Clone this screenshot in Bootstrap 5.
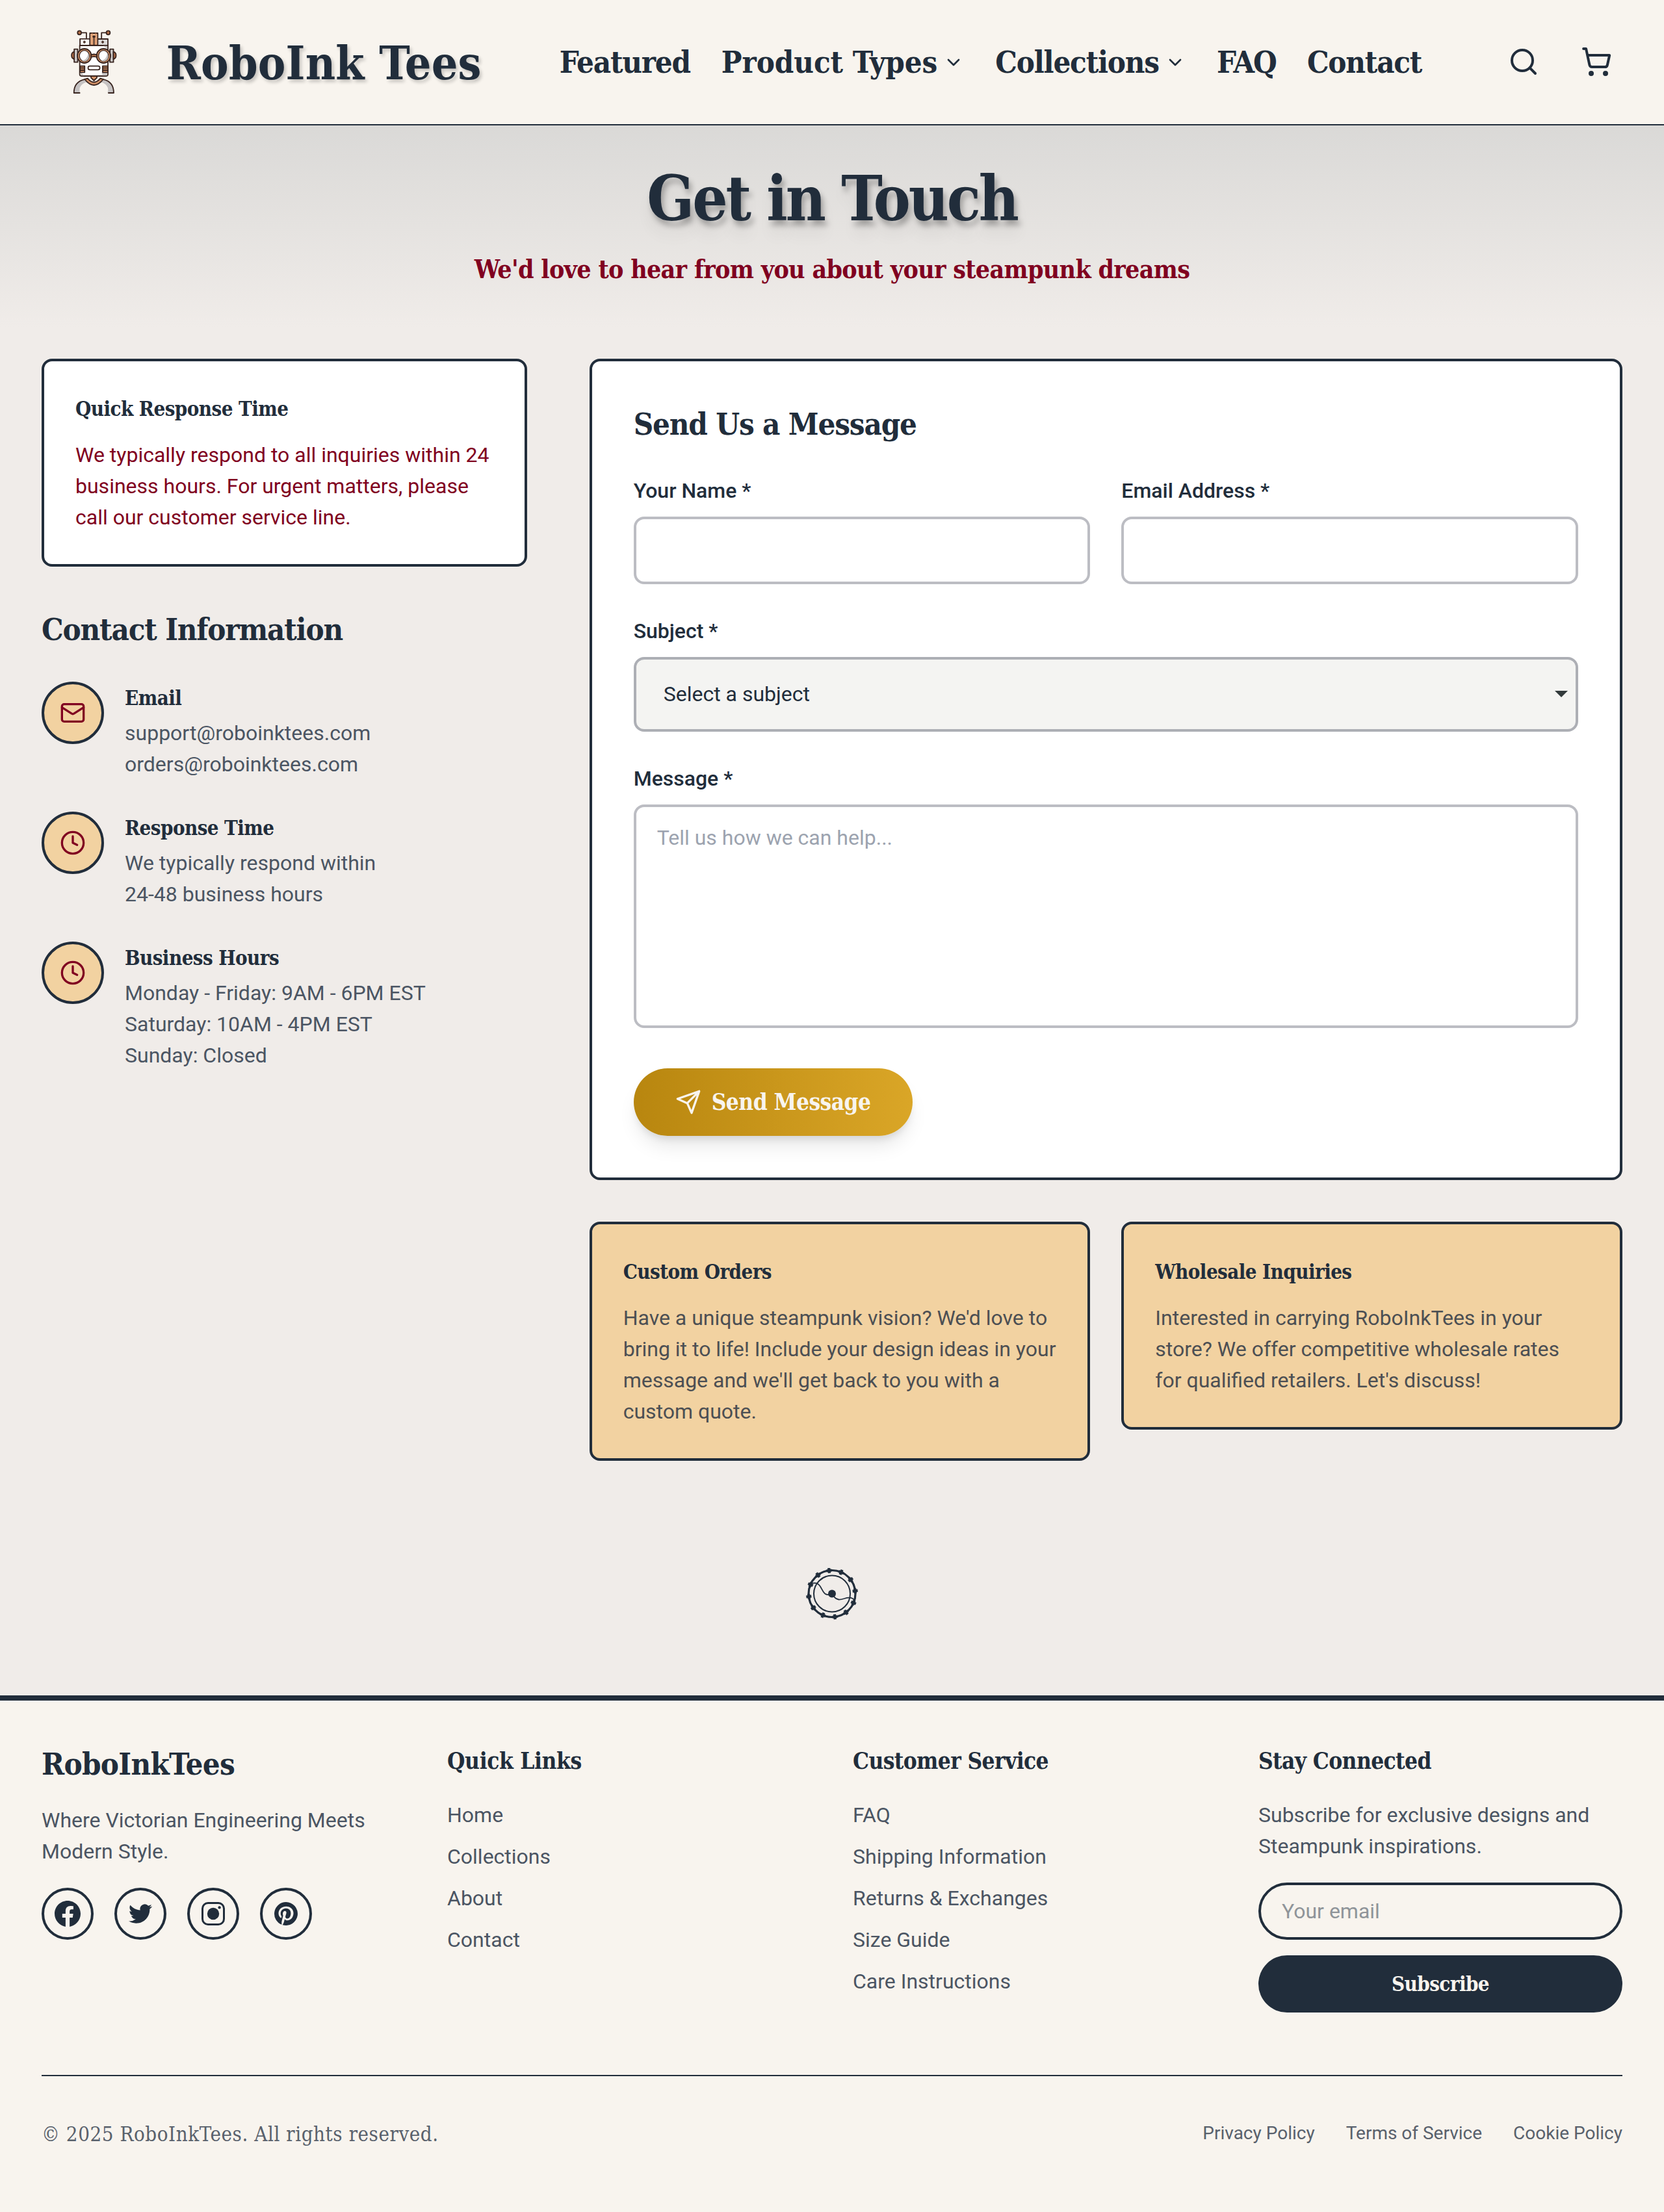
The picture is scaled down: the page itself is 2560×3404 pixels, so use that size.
<!DOCTYPE html>
<html lang="en">
<head>
<meta charset="utf-8">
<meta name="viewport" content="width=device-width, initial-scale=1">
<title>Contact - RoboInk Tees</title>
<link href="https://cdn.jsdelivr.net/npm/bootstrap@5.3.0/dist/css/bootstrap.min.css" rel="stylesheet">
<style>
:root{--navy:#212d3b;--wine:#800020;--cream:#f8f4ee;--slab:"Roboto Slab","DejaVu Serif Condensed","DejaVu Serif",serif}
body{font:400 32px/48px Roboto,sans-serif;color:var(--navy);background:#f0ece9}
h1,h2,h3,p,ul{margin:0}
a{color:inherit;text-decoration:none}
svg{display:block;flex:none}
.ln{fill:none;stroke:currentColor;stroke-width:2;stroke-linecap:round;stroke-linejoin:round}
.slab{font-family:var(--slab);font-stretch:condensed;font-weight:700;white-space:nowrap;letter-spacing:-.018em}
.topbar{height:192.5px;background:var(--cream);border-bottom:2px solid var(--navy)}
.robot{width:76px;height:100.7px;margin-left:106.8px}
.robot *{vector-effect:non-scaling-stroke}
.brand{font-size:71px;line-height:72px;margin-left:73px;padding-top:4px;width:605px;letter-spacing:.003em;text-shadow:3px 4px 5px rgba(0,0,0,.2)}
.topnav{gap:48px;font-size:47px;line-height:64px;letter-spacing:-.026em;padding-top:1px}
.topnav .wide{letter-spacing:-.002em}
.topnav .tight{letter-spacing:-.042em}
.topnav svg{width:32px;height:32px;margin-left:9px}
.tools{gap:64px;margin-right:80px}
.hero{height:311.5px;padding-top:63px;background:linear-gradient(#dad9d7,#f0ece9)}
.hero h1{font-size:95px;line-height:96px;padding-top:2px;letter-spacing:-.033em;text-shadow:4px 8px 8px rgba(0,0,0,.28),2px 22px 24px rgba(0,0,0,.06)}
.hero p{font-size:39px;line-height:56px;color:var(--wine);margin-top:32px}
.page{padding:48px 64px 0;height:2104.5px}
.outer{--bs-gutter-x:96px}
.inner{--bs-gutter-x:48px}
.panel{border:4px solid var(--navy);border-radius:16px;background:#fff;padding:48px}
.panel h3,.item h3{font-size:31px;line-height:48px;padding-top:1px}
.panel h3{margin-bottom:22px;padding-bottom:.5px}
.panel>p{padding-bottom:.5px}
.tan{background:#f2d2a1}
.tan p{color:#4c4f53}
.h48{font-size:47px;line-height:64px;padding-top:2px;letter-spacing:-.025em}
.item{gap:32px;margin-bottom:48px;color:#4b5563}
.item h3{color:var(--navy);margin-bottom:6px}
.item p{padding-bottom:1px}
.disc{width:96px;height:96px;border:4px solid var(--navy);background:#f2d2a1;color:var(--wine);flex:none}
.formcard{padding:64px}
.fieldname{font-weight:500;margin:0 0 16px;display:block}
.big.form-control,.big.form-select{border:4px solid #bcbdc3;border-radius:16px;padding:24px 32px;font:inherit;color:var(--navy);height:104px;background-color:#fff}
.big.form-select{height:114.5px;padding:0 0 0 42px;background:#f4f4f2 url("data:image/svg+xml,%3Csvg xmlns='http://www.w3.org/2000/svg' viewBox='0 0 20 10'%3E%3Cpath d='M0 0h20L10 10z' fill='%23323a3b'/%3E%3C/svg%3E") no-repeat right 12px center/20px 10px;border-color:#adafb5}
.big.form-control.tall{height:344px;resize:none;line-height:48px;padding-top:23px}
.big::placeholder{color:#9ca3af;opacity:1}
.send{height:104px;border:0;border-radius:52px;padding:0 64px;gap:16px;color:var(--cream);background:linear-gradient(90deg,#b8860f,#daa627);font-size:35px;line-height:48px;letter-spacing:-.0155em;box-shadow:0 20px 30px -6px rgba(0,0,0,.1),0 8px 12px -4px rgba(0,0,0,.1)}
.foot{background:var(--cream);border-top:8px solid var(--navy);padding:64px 64px 96px}
.foot .row{--bs-gutter-x:64px}
.foot p,.foot li{color:#4b5563}
.foot h3{font-size:35px;line-height:56px;padding-top:1px;margin-bottom:31px}
.foot li{margin-bottom:16px}
.soc{width:80px;height:80px;border:4px solid var(--navy)}
.mailbox.form-control{height:88px;border:4px solid var(--navy);border-radius:44px;background:transparent;padding:0 32px;font:inherit;margin-top:32px}
.mailbox::placeholder{color:#8f9499;opacity:1}
.subs{height:88px;border-radius:44px;background:var(--navy);color:var(--cream);font-size:31px;border:0;margin-top:24px;padding-top:2px}
.legal{border-top:2px solid var(--navy);margin-top:96px;padding-top:64px;color:#59616c}
.legal div{gap:48px;font-size:28px}
.copy{font-weight:400;font-size:31px;letter-spacing:.018em;padding-top:1px}
</style>
<script src="https://cdn.jsdelivr.net/npm/bootstrap@5.3.0/dist/js/bootstrap.bundle.min.js"></script>
</head>
<body>
<header class="topbar d-flex align-items-center">
<svg class="robot" viewBox="60 75 170 302" preserveAspectRatio="none" fill="none" stroke="#38241f" stroke-width="1.8" stroke-linejoin="round" stroke-linecap="round">
<path d="M98 91h20v28M188 91h-18v28"/>
<ellipse cx="94" cy="91" rx="6.500" ry="9" fill="#b5714a"/><ellipse cx="193" cy="91" rx="6.500" ry="9" fill="#b5714a"/>
<path d="M96 120h96v30H96z" fill="#dcdad9"/><path d="M98 122h30v26H98z" fill="#f7f6f5" stroke="none"/>
<path d="M130 93h27v56h-27z" fill="#efb489"/><path d="M138 93v56M150 93v56" stroke="#c98257" stroke-width="1"/><path d="M144 110v38"/><circle cx="144" cy="109" r="3" fill="#38241f"/>
<ellipse cx="111" cy="134" rx="3" ry="5" fill="#6b4c3e" stroke-width="1"/><ellipse cx="174" cy="134" rx="3" ry="5" fill="#6b4c3e" stroke-width="1"/>
<path d="M95 150h97v133q0 8-6 8H101q-6 0-6-8z" fill="#fff"/>
<path d="M174 289q-10-25 16-45v40q0 5-5 5zM176 152h14v12z" fill="#c9c6c5" stroke="none"/><path d="M110 289q-8-14-13-18v12q0 6 5 6z" fill="#c9c6c5" stroke="none"/>
<path d="M76 167h12v60H76zM199 167h12v60h-12z" fill="#cfcccb"/>
<path d="M76 179q-9 3-9 17t9 17zM211 179q9 3 9 17t-9 17z" fill="#b5714a"/>
<ellipse cx="111" cy="198" rx="24" ry="33" fill="#d39369"/><ellipse cx="177" cy="198" rx="24" ry="33" fill="#d39369"/>
<path d="M134 193q10-5 20 0v11q-10-5-20 0z" fill="#c07c52"/>
<ellipse cx="111" cy="198" rx="17" ry="25" fill="#fff" stroke-width="1.300"/><ellipse cx="177" cy="198" rx="17" ry="25" fill="#fff" stroke-width="1.300"/>
<path d="M103 220q19-5 21-35 8 20-4 34-9 8-17 1zM169 220q19-5 21-35 8 20-4 34-9 8-17 1z" fill="#c6c3c2" stroke="none"/>
<rect x="124" y="245" width="40" height="17" rx="6" fill="#fff"/>
<path d="M96 245h16v29H96zM174 245h18v29h-18z" fill="#d39369"/><path d="M96 254h16M96 264h16M174 254h18M174 264h18"/>
<path d="M134 291h20v8l-10 13-10-13z" fill="#d39369"/>
<path d="M76 368q0-45 35-61l8 12q-19 8-24 27-2 14 1 22zM211 368q0-45-35-61l-8 12q19 8 24 27 2 14-1 22z" fill="#c5c2c2" stroke="none"/>
<path d="M95 369H75q0-52 37-63M194 369h18q0-52-36-63"/>
<path d="M112 306l10-4q22 35 44 0l10 4q-32 54-64 0z" fill="#d39369"/>
</svg>
<a class="brand slab" href="#">RoboInk Tees</a>
<nav class="topnav slab d-flex align-items-center">
<a href="#">Featured</a>
<a href="#" class="wide d-flex align-items-center">Product Types<svg class="ln" viewBox="0 0 24 24"><path d="m6 9 6 6 6-6"/></svg></a>
<a href="#" class="d-flex align-items-center">Collections<svg class="ln" viewBox="0 0 24 24"><path d="m6 9 6 6 6-6"/></svg></a>
<a href="#" class="tight">FAQ</a>
<a href="#">Contact</a>
</nav>
<div class="tools d-flex ms-auto">
<svg class="ln" width="48" height="48" viewBox="0 0 24 24"><circle cx="11" cy="11" r="8"/><path d="m21 21-4.300-4.300"/></svg>
<svg class="ln" width="48" height="48" viewBox="0 0 24 24"><circle cx="8" cy="21" r="1"/><circle cx="19" cy="21" r="1"/><path d="M2.050 2.050h2l2.660 12.420a2 2 0 0 0 2 1.580h9.780a2 2 0 0 0 1.950-1.570l1.650-7.430H5.120"/></svg>
</div>
</header>

<section class="hero text-center">
<h1 class="slab">Get in Touch</h1>
<p class="slab">We'd love to hear from you about your steampunk dreams</p>
</section>

<main class="page d-flex flex-column">
<div class="row outer">
<div class="col-4">
<div class="panel"><h3 class="slab">Quick Response Time</h3><p style="color:var(--wine)">We typically respond to all inquiries within 24 business hours. For urgent matters, please call our customer service line.</p></div>
<h2 class="slab h48" style="margin:63px 0 47.500px">Contact Information</h2>
<div class="item d-flex"><div class="disc rounded-circle d-flex align-items-center justify-content-center"><svg class="ln" width="40" height="40" viewBox="0 0 24 24"><rect x="2" y="4" width="20" height="16" rx="2"/><path d="m22 7-8.970 5.700a1.940 1.940 0 0 1-2.060 0L2 7"/></svg></div>
<div><h3 class="slab">Email</h3><p>support@roboinktees.com<br>orders@roboinktees.com</p></div></div>
<div class="item d-flex"><div class="disc rounded-circle d-flex align-items-center justify-content-center"><svg class="ln" width="40" height="40" viewBox="0 0 24 24"><circle cx="12" cy="12" r="10"/><path d="M12 6v6l4 2"/></svg></div>
<div><h3 class="slab">Response Time</h3><p>We typically respond within<br>24-48 business hours</p></div></div>
<div class="item d-flex"><div class="disc rounded-circle d-flex align-items-center justify-content-center"><svg class="ln" width="40" height="40" viewBox="0 0 24 24"><circle cx="12" cy="12" r="10"/><path d="M12 6v6l4 2"/></svg></div>
<div><h3 class="slab">Business Hours</h3><p>Monday - Friday: 9AM - 6PM EST<br>Saturday: 10AM - 4PM EST<br>Sunday: Closed</p></div></div>
</div>

<div class="col-8">
<form class="panel formcard">
<h2 class="slab h48" style="margin-bottom:46px;padding-top:1px">Send Us a Message</h2>
<div class="row inner">
<div class="col-6"><label class="fieldname" for="fn">Your Name *</label><input id="fn" class="form-control big"></div>
<div class="col-6"><label class="fieldname" for="fe">Email Address *</label><input id="fe" class="form-control big"></div>
</div>
<label class="fieldname" for="fs" style="margin-top:48px">Subject *</label>
<select id="fs" class="form-select big"><option>Select a subject</option></select>
<label class="fieldname" for="fm" style="margin-top:48px">Message *</label>
<textarea id="fm" class="form-control big tall" placeholder="Tell us how we can help..."></textarea>
<button type="button" class="send slab d-flex align-items-center" style="margin-top:62.500px"><svg class="ln" width="40" height="40" viewBox="0 0 24 24"><path d="m22 2-7 20-4-9-9-4ZM22 2 11 13"/></svg>Send Message</button>
</form>
<div class="row inner align-items-start" style="margin-top:64px">
<div class="col-6"><div class="panel tan"><h3 class="slab">Custom Orders</h3><p>Have a unique steampunk vision? We'd love to bring it to life! Include your design ideas in your message and we'll get back to you with a custom quote.</p></div></div>
<div class="col-6"><div class="panel tan"><h3 class="slab">Wholesale Inquiries</h3><p>Interested in carrying RoboInkTees in your store? We offer competitive wholesale rates for qualified retailers. Let's discuss!</p></div></div>
</div>
</div>
</div>
<svg class="mx-auto mt-auto" style="margin-bottom:116px" width="80" height="80" viewBox="0 0 80 80" fill="none" stroke="#212d3b">
<circle cx="40" cy="39.500" r="36" stroke-width="3.200"/><circle cx="40" cy="39.500" r="28" stroke-width="2"/>
<path stroke-width="1.800" d="M8 24c6-2 10-1 13 3 4 5 6 15 14 14M43 44c5 6 9 5 16 3 6-2 12-3 16 3"/>
<circle cx="40" cy="39.500" r="6" fill="#212d3b" stroke="none"/>
<g id="cogs" fill="#212d3b" stroke="none" transform="rotate(-7 40 39.500)"></g>
</svg>
</main>

<footer class="foot">
<div class="row">
<div class="col-3">
<h2 class="slab h48" style="margin-bottom:30px;letter-spacing:-.0147em">RoboInkTees</h2>
<p>Where Victorian Engineering Meets<br>Modern Style.</p>
<div class="d-flex" style="gap:32px;margin-top:32px">
<a href="#" class="soc rounded-circle d-flex align-items-center justify-content-center"><svg width="40" height="40" viewBox="0 0 24 24" fill="currentColor"><path d="M24 12.073c0-6.627-5.373-12-12-12s-12 5.373-12 12c0 5.990 4.388 10.954 10.125 11.854v-8.385H7.078v-3.470h3.047V9.430c0-3.007 1.792-4.669 4.533-4.669 1.312 0 2.686.235 2.686.235v2.953H15.830c-1.491 0-1.956.925-1.956 1.874v2.250h3.328l-.532 3.470h-2.796v8.385C19.612 23.027 24 18.062 24 12.073z"/></svg></a>
<a href="#" class="soc rounded-circle d-flex align-items-center justify-content-center"><svg width="36" height="36" viewBox="0 0 24 24" fill="currentColor"><path d="M23.953 4.570a10 10 0 01-2.825.775 4.958 4.958 0 002.163-2.723c-.951.555-2.005.959-3.127 1.184a4.920 4.920 0 00-8.384 4.482C7.690 8.095 4.067 6.130 1.640 3.162a4.822 4.822 0 00-.666 2.475c0 1.710.870 3.213 2.188 4.096a4.904 4.904 0 01-2.228-.616v.060a4.923 4.923 0 003.946 4.827 4.996 4.996 0 01-2.212.085 4.936 4.936 0 004.604 3.417 9.867 9.867 0 01-6.102 2.105c-.390 0-.779-.023-1.170-.067a13.995 13.995 0 007.557 2.209c9.053 0 13.998-7.496 13.998-13.985 0-.210 0-.420-.015-.630A9.935 9.935 0 0024 4.590z"/></svg></a>
<a href="#" class="soc rounded-circle d-flex align-items-center justify-content-center"><svg width="36" height="36" viewBox="0 0 36 36"><rect x="1.500" y="1.500" width="33" height="33" rx="8.500" fill="none" stroke="currentColor" stroke-width="3"/><circle cx="18" cy="18" r="9.200" fill="currentColor"/><circle cx="27.600" cy="8.400" r="2.200" fill="currentColor"/></svg></a>
<a href="#" class="soc rounded-circle d-flex align-items-center justify-content-center"><svg width="36" height="36" viewBox="0 0 24 24" fill="currentColor"><path d="M12 0a12 12 0 0 0-4.370 23.170c-.1-.95-.2-2.400.04-3.440l1.400-5.960s-.36-.72-.36-1.770c0-1.660.96-2.900 2.160-2.900 1.020 0 1.510.77 1.510 1.680 0 1.030-.65 2.560-.99 3.980-.28 1.200.6 2.170 1.780 2.170 2.130 0 3.770-2.250 3.770-5.490 0-2.870-2.060-4.880-5.010-4.880-3.410 0-5.420 2.560-5.420 5.200 0 1.030.4 2.140.9 2.740.1.12.11.22.08.35l-.33 1.360c-.05.22-.17.27-.4.16-1.500-.7-2.430-2.890-2.430-4.650 0-3.780 2.750-7.260 7.930-7.260 4.160 0 7.400 2.970 7.400 6.930 0 4.140-2.610 7.460-6.230 7.460-1.220 0-2.360-.63-2.750-1.380l-.75 2.850c-.27 1.040-1 2.350-1.490 3.150A12 12 0 1 0 12 0z"/></svg></a>
</div>
</div>
<div class="col-3"><h3 class="slab" style="letter-spacing:-.01em">Quick Links</h3><ul class="list-unstyled"><li>Home</li><li>Collections</li><li>About</li><li>Contact</li></ul></div>
<div class="col-3"><h3 class="slab">Customer Service</h3><ul class="list-unstyled"><li>FAQ</li><li>Shipping Information</li><li>Returns &amp; Exchanges</li><li>Size Guide</li><li>Care Instructions</li></ul></div>
<div class="col-3"><h3 class="slab">Stay Connected</h3><p>Subscribe for exclusive designs and<br>Steampunk inspirations.</p>
<input class="form-control mailbox" placeholder="Your email"><button class="subs slab w-100">Subscribe</button></div>
</div>
<div class="legal d-flex justify-content-between align-items-center"><span class="slab copy">© 2025 RoboInkTees. All rights reserved.</span><div class="d-flex"><a href="#">Privacy Policy</a><a href="#">Terms of Service</a><a href="#">Cookie Policy</a></div></div>
</footer>
<script>
// twelve cog teeth spaced evenly round the gear rim
let teeth='';
for(let i=0;i<12;i++)teeth+=`<path d="M37.900 -.4h4.200v8h-4.200zM36 1.600h8v4.200h-8z" transform="rotate(${i*30} 40 39.500)"/>`;
document.getElementById('cogs').innerHTML=teeth;
</script>
</body>
</html>
